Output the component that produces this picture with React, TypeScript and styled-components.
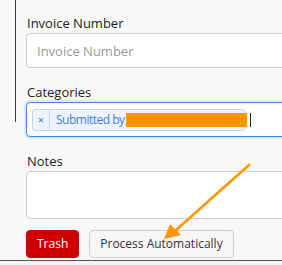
import styled, { createGlobalStyle } from 'styled-components';

const GlobalStyle = createGlobalStyle`
  html, body {
    margin: 0;
    padding: 0;
    background: #f8f8f8;
    font-family: 'Open Sans', 'Liberation Sans', sans-serif;
  }
`;

const App = () => {
  return (
    <>
      <GlobalStyle />
      <Page>
        <Rail />
        <Form>
          <Label>Invoice Number</Label>
          <TextInput placeholder="Invoice Number" />
          <Label>Categories</Label>
          <TagBox>
            <Tag>
              <TagRemove>×</TagRemove>
              <TagText>Submitted by</TagText>
              <Redacted />
            </Tag>
            <Caret />
          </TagBox>
          <Label>Notes</Label>
          <Notes />
          <Actions>
            <Button variant="danger">Trash</Button>
            <Button>Process Automatically</Button>
          </Actions>
        </Form>
        <Arrow width="282" height="265" viewBox="0 0 282 265">
          <line x1="249" y1="165" x2="175" y2="231" stroke="#ff9500" strokeWidth="2.6" strokeLinecap="round" />
          <polygon points="164,239 170,224 181,235" fill="#ff9500" />
        </Arrow>
      </Page>
      <Footer />
    </>
  );
};

export default App;

const Page = styled.div`
  position: relative;
  display: flex;
  height: 260px;
  overflow: hidden;
`;

const Rail = styled.div`
  flex: 0 0 15px;
  height: 122px;
  border-right: 1px solid #3a3a3a;
`;

const Form = styled.div`
  flex: 1;
  display: flex;
  flex-direction: column;
  align-items: flex-start;
  padding: 14px 0 0 10px;
  min-width: 0;
`;

const Label = styled.div`
  font-size: 13px;
  line-height: 18px;
  color: #222;
  margin: 0 0 1px 1px;
  & + * {
    margin-bottom: 15px;
  }
`;

const TextInput = styled.input`
  box-sizing: border-box;
  flex-shrink: 0;
  width: 320px;
  height: 35px;
  border: 1px solid #cfcfcf;
  border-radius: 4px;
  background: #fff;
  padding: 0 10px;
  font-family: inherit;
  font-size: 13px;
  color: #333;
  outline: none;
  &::placeholder {
    color: #9a9a9a;
  }
`;

const TagBox = styled.div`
  box-sizing: border-box;
  flex-shrink: 0;
  width: 320px;
  height: 35px;
  border: 1px solid #3d86ea;
  border-radius: 4px;
  background: #fff;
  box-shadow: 0 0 0 2px #dbe9fb;
  display: flex;
  align-items: center;
  padding: 0 5px;
  gap: 3px;
`;

const Tag = styled.div`
  flex-shrink: 0;
  display: flex;
  align-items: center;
  height: 20px;
  border: 1px solid #bcd6f6;
  border-radius: 2px;
  background: #edf4fd;
  color: #3b7fe3;
  white-space: nowrap;
`;

const TagRemove = styled.span`
  align-self: stretch;
  width: 16px;
  line-height: 19px;
  text-align: center;
  border-right: 1px solid #bcd6f6;
  font-size: 11px;
`;

const TagText = styled.span`
  padding: 0 1px 0 6px;
  font-size: 12px;
  letter-spacing: -0.5px;
`;

const Redacted = styled.span`
  flex-shrink: 0;
  width: 121px;
  height: 14px;
  margin-right: -3px;
  background: #ff9500;
`;

const Caret = styled.span`
  width: 1px;
  height: 14px;
  margin-left: 2px;
  background: #222;
`;

const Notes = styled.textarea`
  box-sizing: border-box;
  flex-shrink: 0;
  width: 320px;
  height: 48px;
  border: 1px solid #cfcfcf;
  border-radius: 4px;
  background: #fff;
  resize: none;
  outline: none;
  margin-bottom: 11px !important;
`;

const Actions = styled.div`
  display: flex;
  gap: 10px;
`;

const Button = styled.button<{ variant?: 'danger' }>`
  box-sizing: border-box;
  height: 28px;
  padding: 0 10px;
  border-radius: 4px;
  border: 1px solid ${({ variant }) => (variant === 'danger' ? '#c80000' : '#cfcfcf')};
  background: ${({ variant }) => (variant === 'danger' ? '#cc0000' : '#f7f7f7')};
  color: ${({ variant }) => (variant === 'danger' ? '#fff' : '#333340')};
  font-family: inherit;
  font-size: 12px;
  line-height: 26px;
`;

const Arrow = styled.svg`
  position: absolute;
  left: 0;
  top: 0;
  pointer-events: none;
`;

const Footer = styled.div`
  height: 5px;
  border-top: 1px solid #555;
  background: #f3f3f3;
`;
